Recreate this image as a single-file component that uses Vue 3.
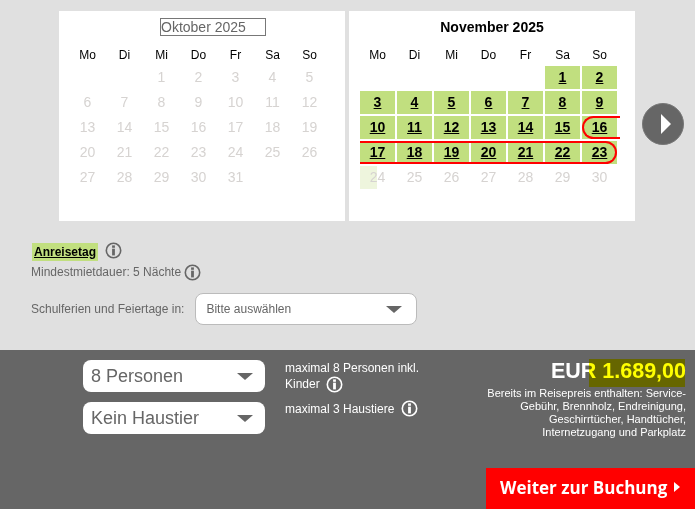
<script setup>
import { ref } from 'vue'

const weekdays = ['Mo', 'Di', 'Mi', 'Do', 'Fr', 'Sa', 'So']

// builds the cells of one month, offset = empty cells before the 1st
const buildDays = (offset, count) => {
  const days = []
  for (let i = 0; i < offset; i++) days.push({ id: 'e' + i, label: '' })
  for (let d = 1; d <= count; d++) days.push({ id: d, label: d })
  return days
}

const october = ref(buildDays(2, 31))
const november = ref(buildDays(5, 30))
</script>

<template>
  <div class="page">
    <div class="calendars">
      <div class="month">
        <div class="month-title"><span class="month-input">Oktober 2025</span></div>
        <div class="day-grid">
          <div v-for="w in weekdays" :key="w" class="weekday">{{ w }}</div>
          <div v-for="d in october" :key="d.id" class="day off">{{ d.label }}</div>
        </div>
      </div>

      <div class="month">
        <div class="month-title"><b>November 2025</b></div>
        <div class="day-grid">
          <div v-for="w in weekdays" :key="w" class="weekday">{{ w }}</div>
          <template v-for="d in november" :key="d.id">
            <div v-if="d.label === ''" class="day"></div>
            <a v-else-if="d.label < 24" class="day free">{{ d.label }}</a>
            <div v-else class="day off" :class="{ half: d.label === 24 }">{{ d.label }}</div>
          </template>
        </div>
        <div class="mark mark-start"></div>
        <div class="mark mark-end"></div>
      </div>

      <button class="next-btn">
        <svg width="42" height="42" viewBox="0 0 42 42">
          <circle cx="21" cy="21" r="20.5" fill="#666" stroke="#777" />
          <path d="M19 11 L29 21 L19 31 Z" fill="#fff" />
        </svg>
      </button>
    </div>

    <div class="legend">
      <div class="legend-row">
        <span class="arrival">Anreisetag</span>
        <svg class="info info-first" width="17" height="17" viewBox="0 0 17 17">
          <circle cx="8.5" cy="8.5" r="7.2" fill="none" stroke="#666" stroke-width="1.6" />
          <rect x="7.1" y="3.4" width="2.8" height="2.4" fill="#666" />
          <rect x="7.1" y="6.7" width="2.8" height="6.7" fill="#666" />
        </svg>
      </div>
      <div class="min-stay">
        Mindestmietdauer: 5 Nächte
        <svg class="info" width="17" height="17" viewBox="0 0 17 17">
          <circle cx="8.5" cy="8.5" r="7.2" fill="none" stroke="#666" stroke-width="1.6" />
          <rect x="7.1" y="3.4" width="2.8" height="2.4" fill="#666" />
          <rect x="7.1" y="6.7" width="2.8" height="6.7" fill="#666" />
        </svg>
      </div>
      <div class="holidays">
        <span>Schulferien und Feiertage in:</span>
        <div class="holiday-select">
          <span>Bitte auswählen</span>
          <i class="caret"></i>
        </div>
      </div>
    </div>

    <div class="bottom-bar">
      <div class="selects">
        <div class="big-select"><span>8 Personen</span><i class="caret"></i></div>
        <div class="big-select"><span>Kein Haustier</span><i class="caret"></i></div>
      </div>

      <div class="notes">
        <div class="note note-people">
          maximal 8 Personen inkl.<br />Kinder
          <svg class="info info-people" width="17" height="17" viewBox="0 0 17 17">
            <circle cx="8.5" cy="8.5" r="7.2" fill="none" stroke="#fff" stroke-width="1.6" />
            <rect x="7.1" y="3.4" width="2.8" height="2.4" fill="#fff" />
            <rect x="7.1" y="6.7" width="2.8" height="6.7" fill="#fff" />
          </svg>
        </div>
        <div class="note">
          maximal 3 Haustiere
          <svg class="info info-pets" width="17" height="17" viewBox="0 0 17 17">
            <circle cx="8.5" cy="8.5" r="7.2" fill="none" stroke="#fff" stroke-width="1.6" />
            <rect x="7.1" y="3.4" width="2.8" height="2.4" fill="#fff" />
            <rect x="7.1" y="6.7" width="2.8" height="6.7" fill="#fff" />
          </svg>
        </div>
      </div>

      <div class="summary">
        <div class="price">EUR 1.689,00<span class="price-mark"></span></div>
        <p class="included">Bereits im Reisepreis enthalten: Service-Gebühr, Brennholz, Endreinigung, Geschirrtücher, Handtücher, Internetzugang und Parkplatz</p>
        <button class="book-btn">Weiter zur Buchung<i class="book-arrow"></i></button>
      </div>
    </div>
  </div>
</template>

<style>
html, body { margin: 0; background: #e0e0e0; }
</style>

<style scoped>
.page { width: 695px; height: 509px; display: flex; flex-direction: column; overflow: hidden; background: #e0e0e0; font-family: "Liberation Sans", Arial, sans-serif; color: #666; }

/* Calendars */
.calendars { display: flex; gap: 4px; padding: 11px 0 0 59px; }
.month { position: relative; width: 275px; height: 210px; padding-left: 11px; background: #fff; }
.month-title { height: 20px; padding-top: 6px; margin-left: -11px; text-align: center; font-size: 14px; line-height: 20px; color: #000; }
.month-input { display: inline-block; box-sizing: border-box; width: 106px; height: 18px; margin: 1px 0 0 22px; border: 1px solid #777; font-size: 14px; line-height: 16px; text-align: left; color: #666; vertical-align: top; }
.day-grid { display: grid; grid-template-columns: repeat(7, 35px); grid-template-rows: 18px; grid-auto-rows: 23px; gap: 2px; margin-top: 9px; }
.weekday { font-size: 12px; line-height: 18px; text-align: center; color: #000; }
.day { font-size: 14px; line-height: 23px; text-align: center; }
.day.off { color: #d6d3d1; }
.day.half { background: linear-gradient(to right, #eef5dd 50%, transparent 50%); }
.day.free { background: #c1df7f; color: #000; font-weight: 700; text-decoration: underline; }

.mark { position: absolute; box-sizing: border-box; border: 2px solid #f00; pointer-events: none; }
.mark-start { left: 233px; top: 105px; width: 38px; height: 23px; border-right: 0; border-radius: 12px 0 0 12px; }
.mark-end { left: 11px; top: 130px; width: 257px; height: 23px; border-left: 0; border-radius: 0 12px 12px 0; }

.next-btn { align-self: center; width: 42px; height: 42px; margin: 16px 0 0 3px; padding: 0; border: 0; background: none; cursor: pointer; }
.next-btn svg { display: block; }

/* Legend */
.legend { padding: 22px 0 0 32px; font-size: 12px; }
.legend-row { display: flex; align-items: center; height: 18px; }
.arrival { padding: 0 2px; background: #c1df7f; color: #000; font-size: 12px; font-weight: 700; line-height: 18px; text-decoration: underline; }
.info { vertical-align: middle; }
.info-first { margin-left: 7px; margin-top: -3px; }
.min-stay { margin: 1px 0 0 -1px; height: 21px; line-height: 21px; white-space: nowrap; }
.holidays { display: flex; align-items: center; margin: 10px 0 0 -1px; gap: 11px; }
.holiday-select { display: flex; align-items: center; justify-content: space-between; box-sizing: border-box; width: 222px; height: 32px; padding: 0 14px 0 10px; border: 1px solid #bbb; border-radius: 8px; background: #fff; }
.caret { display: block; width: 0; height: 0; border-left: 8px solid transparent; border-right: 8px solid transparent; border-top: 7px solid #666; }

/* Bottom bar */
.bottom-bar { display: flex; flex: 1; margin-top: 25px; padding-left: 83px; background: #666; }
.selects { display: flex; flex-direction: column; gap: 10px; padding-top: 10px; }
.big-select { display: flex; align-items: center; justify-content: space-between; box-sizing: border-box; width: 182px; height: 32px; padding: 0 12px 0 8px; border-radius: 8px; background: #fff; font-size: 18px; color: #666; }
.notes { width: 170px; margin-left: 20px; padding-top: 11px; color: #fff; font-size: 12px; line-height: 15px; }
.note-people { height: 41px; }
.info-people { margin-left: 3px; }
.info-pets { margin-left: 3px; margin-top: -3px; }

.summary { position: relative; display: flex; flex-direction: column; align-items: flex-end; width: 209px; margin-left: auto; color: #fff; }
.price { position: relative; height: 28px; margin: 9px 9px 0 0; font-size: 21.5px; font-weight: 700; line-height: 24px; }
.price-mark { position: absolute; top: 0; right: 1px; width: 96px; height: 28px; background: #ff0; mix-blend-mode: multiply; }
.included { width: 204px; margin: 0 9px 0 0; font-size: 11px; line-height: 13px; text-align: right; color: #fff; }
.book-btn { display: flex; align-items: center; width: 209px; height: 41px; margin-top: auto; padding: 0 0 2px 14px; border: 0; background: #f00; color: #fff; font-family: "Open Sans", sans-serif; font-size: 17px; font-weight: 700; cursor: pointer; }
.book-arrow { width: 0; height: 0; margin: -1px 0 0 7px; border-top: 5px solid transparent; border-bottom: 5px solid transparent; border-left: 6px solid #fff; }
</style>
